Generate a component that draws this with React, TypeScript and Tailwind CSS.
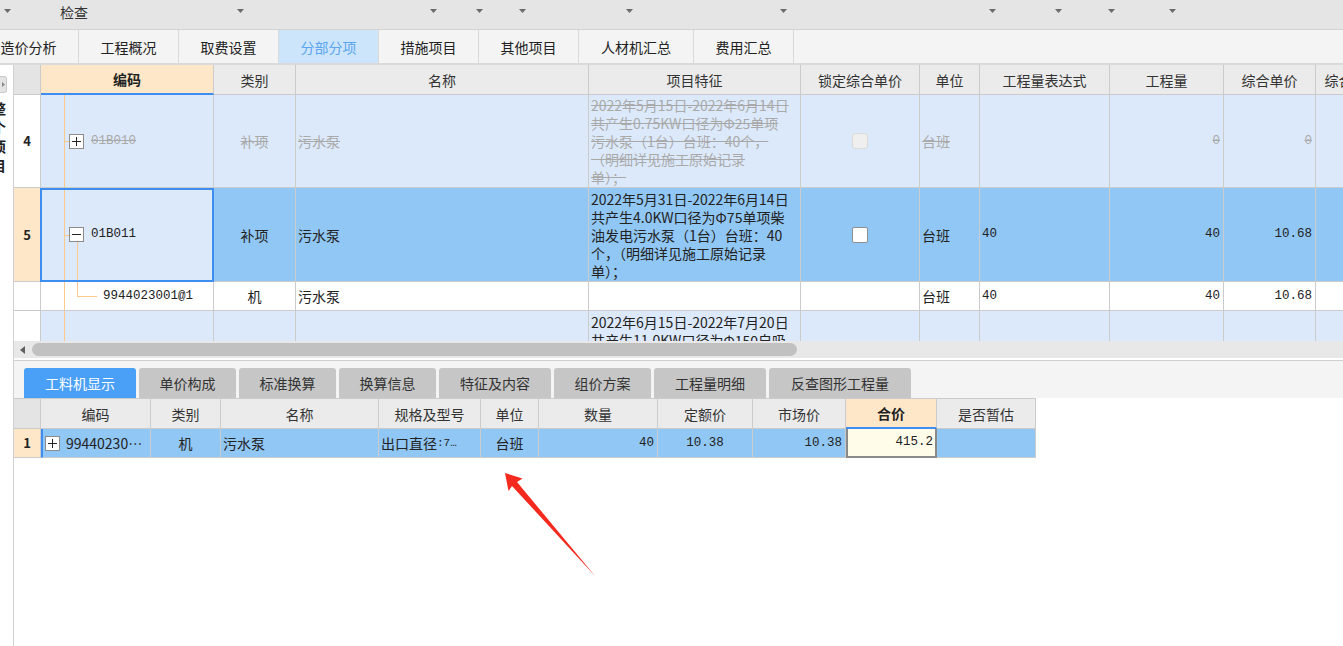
import React from "react";

const CJK = "font-[family-name:'Noto_Sans_CJK_SC',sans-serif]";
const MONO = "font-[family-name:'Liberation_Mono',monospace]";

const MW = ["w-[27px]", "w-[173px]", "w-[82px]", "w-[293px]", "w-[212px]", "w-[119px]", "w-[60px]", "w-[130px]", "w-[114px]", "w-[92px]", "w-[74px]"];
const BW = ["w-[27px]", "w-[110px]", "w-[70px]", "w-[158px]", "w-[102px]", "w-[58px]", "w-[119px]", "w-[95px]", "w-[93px]", "w-[91px]", "w-[99px]"];

function Tri() {
  return (
    <svg width="7" height="4" viewBox="0 0 7 4" className="shrink-0 self-start mt-[9px]">
      <path d="M0 0H7L3.5 4Z" fill="#6b6b6b" />
    </svg>
  );
}

function PlusBox({ minus = false }: { minus?: boolean }) {
  return (
    <div className="w-[15px] h-[15px] shrink-0 border border-[#8c8c8c] bg-white flex items-center justify-center">
      <svg width="9" height="9" viewBox="0 0 9 9">
        <path d="M0 4.5H9" stroke="#222" strokeWidth="1" />
        {!minus && <path d="M4.5 0V9" stroke="#222" strokeWidth="1" />}
      </svg>
    </div>
  );
}

function TopBar() {
  return (
    <div className="h-[30px] bg-[#e5e5e5] border-b border-[#d2d2d2] flex items-start">
      <div className="ml-[4px] flex self-stretch"><Tri /></div>
      <span className="ml-[49px] mt-[3px] leading-[18px] text-[#333]">检查</span>
      <div className="ml-[149px] flex self-stretch"><Tri /></div>
      <div className="ml-[186px] flex self-stretch"><Tri /></div>
      <div className="ml-[39px] flex self-stretch"><Tri /></div>
      <div className="ml-[36px] flex self-stretch"><Tri /></div>
      <div className="ml-[100px] flex self-stretch"><Tri /></div>
      <div className="ml-[147px] flex self-stretch"><Tri /></div>
      <div className="ml-[202px] flex self-stretch"><Tri /></div>
      <div className="ml-[59px] flex self-stretch"><Tri /></div>
      <div className="ml-[46px] flex self-stretch"><Tri /></div>
      <div className="ml-[54px] flex self-stretch"><Tri /></div>
    </div>
  );
}

function TopTabs() {
  const tabs: [string, string, boolean?][] = [
    ["工程概况", "w-[100px]"],
    ["取费设置", "w-[100px]"],
    ["分部分项", "w-[100px]", true],
    ["措施项目", "w-[100px]"],
    ["其他项目", "w-[100px]"],
    ["人材机汇总", "w-[115px]"],
    ["费用汇总", "w-[100px]"],
  ];
  return (
    <div className="h-[35px] bg-[#f4f4f4] border-b-2 border-[#dadada] flex">
      <div className="w-[79px] pr-[21px] border-r border-[#dadada] flex items-center justify-center text-[#222] leading-[18px] whitespace-nowrap">
        造价分析
      </div>
      {tabs.map(([t, w, a]) => (
        <div
          key={t}
          className={`${w} shrink-0 border-r border-[#dadada] flex items-center justify-center leading-[18px] whitespace-nowrap ${
            a ? "bg-[#cde5fb] text-[#5aa5ee]" : "text-[#222]"
          }`}
        >
          {t}
        </div>
      ))}
    </div>
  );
}

function LeftStrip() {
  return (
    <div className="w-[14px] shrink-0 h-full border-r border-[#d0d0d0] bg-white overflow-hidden flex flex-col">
      <div className="mt-[11px] w-[7px] h-[17px] rounded-r-[3px] bg-[#e4e4e4] border border-l-0 border-[#c9c9c9] flex items-center justify-center">
        <svg width="3" height="5" viewBox="0 0 3 5">
          <path d="M0 0L3 2.5L0 5Z" fill="#8a8a8a" />
        </svg>
      </div>
      <div className="mt-[6px] -ml-[8px] flex flex-col text-[14px] leading-[19px] font-bold text-[#222]">
        <span>整</span>
        <span>个</span>
        <span>项</span>
        <span>目</span>
      </div>
    </div>
  );
}

const GL = "border-r border-[#cbcbcb]";

function HCell({ i, children, bold = false }: { i: number; children?: React.ReactNode; bold?: boolean }) {
  return (
    <div
      className={`${MW[i]} shrink-0 h-full ${GL} border-b border-b-[#cbcbcb] bg-[#ebebeb] flex items-center justify-center leading-[18px] whitespace-nowrap text-[#333] ${
        bold ? "font-bold" : ""
      }`}
    >
      {children}
    </div>
  );
}

function Lines({ lines, dim = false }: { lines: string[]; dim?: boolean }) {
  return (
    <div className={`flex flex-col pl-[2px] text-[14px] leading-[18px] ${dim ? "text-[#a9a9a9]" : "text-[#222]"}`}>
      {lines.map((l, k) => (
        <span key={k} className={`whitespace-nowrap ${dim ? "line-through" : ""}`}>
          {l}
        </span>
      ))}
    </div>
  );
}

function MainGrid() {
  const dimT = "text-[#a9a9a9] line-through";
  return (
    <div className="h-[276px] overflow-hidden flex flex-col">
      {/* header */}
      <div className="flex h-[30px] shrink-0">
        <div className={`${MW[0]} shrink-0 h-full ${GL} border-b border-b-[#cbcbcb] bg-[#e4e4e4]`} />
        <div className={`${MW[1]} shrink-0 h-full ${GL} border-b-2 border-b-[#3d8ef0] bg-[#fde7c8] flex items-center justify-center font-bold leading-[18px] text-[#222]`}>
          编码
        </div>
        <HCell i={2}>类别</HCell>
        <HCell i={3}>名称</HCell>
        <HCell i={4}>项目特征</HCell>
        <HCell i={5}>锁定综合单价</HCell>
        <HCell i={6}>单位</HCell>
        <HCell i={7}>工程量表达式</HCell>
        <HCell i={8}>工程量</HCell>
        <HCell i={9}>综合单价</HCell>
        <HCell i={10}>综合合价</HCell>
      </div>

      {/* row 4 */}
      <div className="flex h-[93px] shrink-0 border-b border-[#cbcbcb] bg-[#dce9fb]">
        <div className={`${MW[0]} shrink-0 ${GL} bg-white flex items-center justify-center font-bold text-[13px] text-[#222]`}>4</div>
        <div className={`${MW[1]} shrink-0 ${GL} relative flex items-center`}>
          <span className="absolute left-[23px] top-0 bottom-0 w-px bg-[#fbc98a]" />
          <span className="absolute left-[23px] top-1/2 w-[5px] h-px bg-[#fbc98a]" />
          <div className="ml-[28px]"><PlusBox /></div>
          <span className={`ml-[7px] ${MONO} text-[12.5px] ${dimT}`}>01B010</span>
        </div>
        <div className={`${MW[2]} shrink-0 ${GL} flex items-center justify-center leading-[18px] ${dimT}`}>补项</div>
        <div className={`${MW[3]} shrink-0 ${GL} flex items-center pl-[2px] leading-[18px] ${dimT}`}>污水泵</div>
        <div className={`${MW[4]} shrink-0 ${GL} flex items-center overflow-hidden`}>
          <Lines
            dim
            lines={["2022年5月15日-2022年6月14日", "共产生0.75KW口径为Φ25单项", "污水泵（1台）台班：40个，", "（明细详见施工原始记录", "单）；"]}
          />
        </div>
        <div className={`${MW[5]} shrink-0 ${GL} flex items-center justify-center`}>
          <div className="w-[16px] h-[16px] rounded-[3px] bg-[#efefef] border border-[#dadada]" />
        </div>
        <div className={`${MW[6]} shrink-0 ${GL} flex items-center pl-[2px] leading-[18px] ${dimT}`}>台班</div>
        <div className={`${MW[7]} shrink-0 ${GL}`} />
        <div className={`${MW[8]} shrink-0 ${GL} flex items-center justify-end pr-[3px] ${MONO} text-[12.5px] ${dimT}`}>0</div>
        <div className={`${MW[9]} shrink-0 ${GL} flex items-center justify-end pr-[3px] ${MONO} text-[12.5px] ${dimT}`}>0</div>
        <div className={`${MW[10]} shrink-0 ${GL}`} />
      </div>

      {/* row 5 */}
      <div className="flex h-[94px] shrink-0 border-b border-[#cbcbcb] bg-[#91c7f4] text-[#222]">
        <div className={`${MW[0]} shrink-0 ${GL} bg-[#fde7c8] flex items-center justify-center font-bold text-[13px]`}>5</div>
        <div className={`${MW[1]} shrink-0 ${GL} relative flex items-center bg-[#dce9fb]`}>
          <span className="absolute left-[23px] top-0 bottom-0 w-px bg-[#fbc98a]" />
          <span className="absolute left-[23px] top-1/2 w-[5px] h-px bg-[#fbc98a]" />
          <span className="absolute left-[36px] top-[54px] bottom-0 w-px bg-[#fbc98a]" />
          <div className="ml-[28px]"><PlusBox minus /></div>
          <span className={`ml-[7px] ${MONO} text-[12.5px]`}>01B011</span>
          <span className="absolute -left-px top-0 -right-px -bottom-px border-2 border-[#3d8ef0]" />
        </div>
        <div className={`${MW[2]} shrink-0 ${GL} flex items-center justify-center leading-[18px]`}>补项</div>
        <div className={`${MW[3]} shrink-0 ${GL} flex items-center pl-[2px] leading-[18px]`}>污水泵</div>
        <div className={`${MW[4]} shrink-0 ${GL} flex items-center overflow-hidden`}>
          <Lines
            lines={["2022年5月31日-2022年6月14日", "共产生4.0KW口径为Φ75单项柴", "油发电污水泵（1台）台班：40", "个，（明细详见施工原始记录", "单）；"]}
          />
        </div>
        <div className={`${MW[5]} shrink-0 ${GL} flex items-center justify-center`}>
          <div className="w-[16px] h-[16px] rounded-[2px] bg-white border border-[#8f8f8f]" />
        </div>
        <div className={`${MW[6]} shrink-0 ${GL} flex items-center pl-[2px] leading-[18px]`}>台班</div>
        <div className={`${MW[7]} shrink-0 ${GL} flex items-center pl-[2px] ${MONO} text-[12.5px]`}>40</div>
        <div className={`${MW[8]} shrink-0 ${GL} flex items-center justify-end pr-[3px] ${MONO} text-[12.5px]`}>40</div>
        <div className={`${MW[9]} shrink-0 ${GL} flex items-center justify-end pr-[3px] ${MONO} text-[12.5px]`}>10.68</div>
        <div className={`${MW[10]} shrink-0 ${GL}`} />
      </div>

      {/* child row */}
      <div className="flex h-[29px] shrink-0 border-b border-[#cbcbcb] bg-white text-[#222]">
        <div className={`${MW[0]} shrink-0 ${GL}`} />
        <div className={`${MW[1]} shrink-0 ${GL} relative flex items-center`}>
          <span className="absolute left-[23px] top-0 bottom-0 w-px bg-[#fbc98a]" />
          <span className="absolute left-[36px] top-0 h-[14px] w-px bg-[#fbc98a]" />
          <span className="absolute left-[36px] top-[14px] w-[20px] h-px bg-[#fbc98a]" />
          <span className={`ml-[62px] ${MONO} text-[12.5px]`}>9944023001@1</span>
        </div>
        <div className={`${MW[2]} shrink-0 ${GL} flex items-center justify-center leading-[18px]`}>机</div>
        <div className={`${MW[3]} shrink-0 ${GL} flex items-center pl-[2px] leading-[18px]`}>污水泵</div>
        <div className={`${MW[4]} shrink-0 ${GL}`} />
        <div className={`${MW[5]} shrink-0 ${GL}`} />
        <div className={`${MW[6]} shrink-0 ${GL} flex items-center pl-[2px] leading-[18px]`}>台班</div>
        <div className={`${MW[7]} shrink-0 ${GL} flex items-center pl-[2px] ${MONO} text-[12.5px]`}>40</div>
        <div className={`${MW[8]} shrink-0 ${GL} flex items-center justify-end pr-[3px] ${MONO} text-[12.5px]`}>40</div>
        <div className={`${MW[9]} shrink-0 ${GL} flex items-center justify-end pr-[3px] ${MONO} text-[12.5px]`}>10.68</div>
        <div className={`${MW[10]} shrink-0 ${GL}`} />
      </div>

      {/* next row (clipped by the scroll viewport) */}
      <div className="flex h-[94px] shrink-0 border-b border-[#cbcbcb] bg-[#dce9fb] text-[#222]">
        <div className={`${MW[0]} shrink-0 ${GL} bg-white`} />
        <div className={`${MW[1]} shrink-0 ${GL} relative`}>
          <span className="absolute left-[23px] top-0 bottom-0 w-px bg-[#fbc98a]" />
        </div>
        <div className={`${MW[2]} shrink-0 ${GL}`} />
        <div className={`${MW[3]} shrink-0 ${GL}`} />
        <div className={`${MW[4]} shrink-0 ${GL} pt-[2px] overflow-hidden`}>
          <Lines lines={["2022年6月15日-2022年7月20日", "共产生11.0KW口径为Φ150自吸"]} />
        </div>
        <div className={`${MW[5]} shrink-0 ${GL}`} />
        <div className={`${MW[6]} shrink-0 ${GL}`} />
        <div className={`${MW[7]} shrink-0 ${GL}`} />
        <div className={`${MW[8]} shrink-0 ${GL}`} />
        <div className={`${MW[9]} shrink-0 ${GL}`} />
        <div className={`${MW[10]} shrink-0 ${GL}`} />
      </div>
    </div>
  );
}

function HScroll() {
  return (
    <div className="h-[17px] shrink-0 bg-[#e8e8e8] flex items-center">
      <svg className="ml-[6px] shrink-0" width="5" height="8" viewBox="0 0 5 8">
        <path d="M5 0V8L0 4Z" fill="#606060" />
      </svg>
      <div className="ml-[7px] w-[765px] h-[13px] rounded-full bg-[#c1c1c1]" />
    </div>
  );
}

function BottomTabs() {
  const tabs: [string, string, boolean?][] = [
    ["工料机显示", "w-[112px]", true],
    ["单价构成", "w-[97px]"],
    ["标准换算", "w-[97px]"],
    ["换算信息", "w-[97px]"],
    ["特征及内容", "w-[112px]"],
    ["组价方案", "w-[97px]"],
    ["工程量明细", "w-[112px]"],
    ["反查图形工程量", "w-[142px]"],
  ];
  return (
    <div className="h-[37px] shrink-0 bg-[#f4f4f4] flex items-end pl-[10px] gap-[3px]">
      {tabs.map(([t, w, a]) => (
        <div
          key={t}
          className={`${w} h-[30px] shrink-0 rounded-t-[3px] flex items-center justify-center leading-[18px] whitespace-nowrap ${
            a ? "bg-[#4a9ff6] text-white" : "bg-[#c6c6c6] text-[#333]"
          }`}
        >
          {t}
        </div>
      ))}
    </div>
  );
}

function BHCell({ i, children }: { i: number; children?: React.ReactNode }) {
  return (
    <div className={`${BW[i]} shrink-0 h-full ${GL} border-b border-b-[#cbcbcb] bg-[#ebebeb] flex items-center justify-center leading-[18px] whitespace-nowrap text-[#333]`}>
      {children}
    </div>
  );
}

function BottomGrid() {
  return (
    <div className="w-[1022px] border-t border-[#cbcbcb] flex flex-col">
      <div className="flex h-[30px]">
        <div className={`${BW[0]} shrink-0 h-full ${GL} border-b border-b-[#cbcbcb] bg-[#e4e4e4]`} />
        <BHCell i={1}>编码</BHCell>
        <BHCell i={2}>类别</BHCell>
        <BHCell i={3}>名称</BHCell>
        <BHCell i={4}>规格及型号</BHCell>
        <BHCell i={5}>单位</BHCell>
        <BHCell i={6}>数量</BHCell>
        <BHCell i={7}>定额价</BHCell>
        <BHCell i={8}>市场价</BHCell>
        <div className={`${BW[9]} shrink-0 h-full ${GL} border-b-2 border-b-[#3d8ef0] bg-[#fde7c8] flex items-center justify-center font-bold leading-[18px] text-[#222]`}>
          合价
        </div>
        <BHCell i={10}>是否暂估</BHCell>
      </div>
      <div className="flex h-[29px] bg-[#91c7f4] text-[#222]">
        <div className={`${BW[0]} shrink-0 h-full ${GL} border-b border-b-[#cbcbcb] bg-[#fde7c8] flex items-center justify-center font-bold text-[13px]`}>1</div>
        <div className={`${BW[1]} shrink-0 h-full ${GL} border-b border-b-[#cbcbcb] border-l-2 border-l-[#3d8ef0] flex items-center overflow-hidden`}>
          <div className="ml-[2px]"><PlusBox /></div>
          <span className="ml-[6px] leading-[18px] whitespace-nowrap">99440230…</span>
        </div>
        <div className={`${BW[2]} shrink-0 h-full ${GL} border-b border-b-[#cbcbcb] flex items-center justify-center leading-[18px]`}>机</div>
        <div className={`${BW[3]} shrink-0 h-full ${GL} border-b border-b-[#cbcbcb] flex items-center pl-[2px] leading-[18px]`}>污水泵</div>
        <div className={`${BW[4]} shrink-0 h-full ${GL} border-b border-b-[#cbcbcb] flex items-center pl-[2px] leading-[18px] whitespace-nowrap overflow-hidden`}>
          出口直径<span className={`${MONO} text-[11px]`}>:7…</span>
        </div>
        <div className={`${BW[5]} shrink-0 h-full ${GL} border-b border-b-[#cbcbcb] flex items-center justify-center leading-[18px]`}>台班</div>
        <div className={`${BW[6]} shrink-0 h-full ${GL} border-b border-b-[#cbcbcb] flex items-center justify-end pr-[3px] ${MONO} text-[12.5px]`}>40</div>
        <div className={`${BW[7]} shrink-0 h-full ${GL} border-b border-b-[#cbcbcb] flex items-center justify-center ${MONO} text-[12.5px]`}>10.38</div>
        <div className={`${BW[8]} shrink-0 h-full ${GL} border-b border-b-[#cbcbcb] flex items-center justify-end pr-[3px] ${MONO} text-[12.5px]`}>10.38</div>
        <div className={`${BW[9]} shrink-0 h-full border-2 border-t-0 border-[#8a8a8a] bg-[#fffdea] flex items-center justify-end pr-[2px] ${MONO} text-[12.5px]`}>415.2</div>
        <div className={`${BW[10]} shrink-0 h-full ${GL} border-b border-b-[#cbcbcb]`} />
      </div>
    </div>
  );
}

function Arrow() {
  return (
    <svg className="absolute left-[500px] top-[468px]" width="100" height="112" viewBox="500 468 100 112">
      <path d="M505 473 L522.5 478.5 L517 482 L595.5 576.5 L512 486 L508.5 491 Z" fill="#f42a1e" />
    </svg>
  );
}

export default function App() {
  return (
    <div className={`w-[1343px] h-[646px] overflow-hidden bg-white relative text-[14px] text-[#333] ${CJK}`}>
      <TopBar />
      <TopTabs />
      <div className="flex h-[581px]">
        <LeftStrip />
        <div className="w-[1329px] flex flex-col overflow-hidden">
          <MainGrid />
          <HScroll />
          <div className="h-[3px] shrink-0 bg-white border-b border-[#cfcfcf]" />
          <BottomTabs />
          <BottomGrid />
        </div>
      </div>
      <Arrow />
    </div>
  );
}
